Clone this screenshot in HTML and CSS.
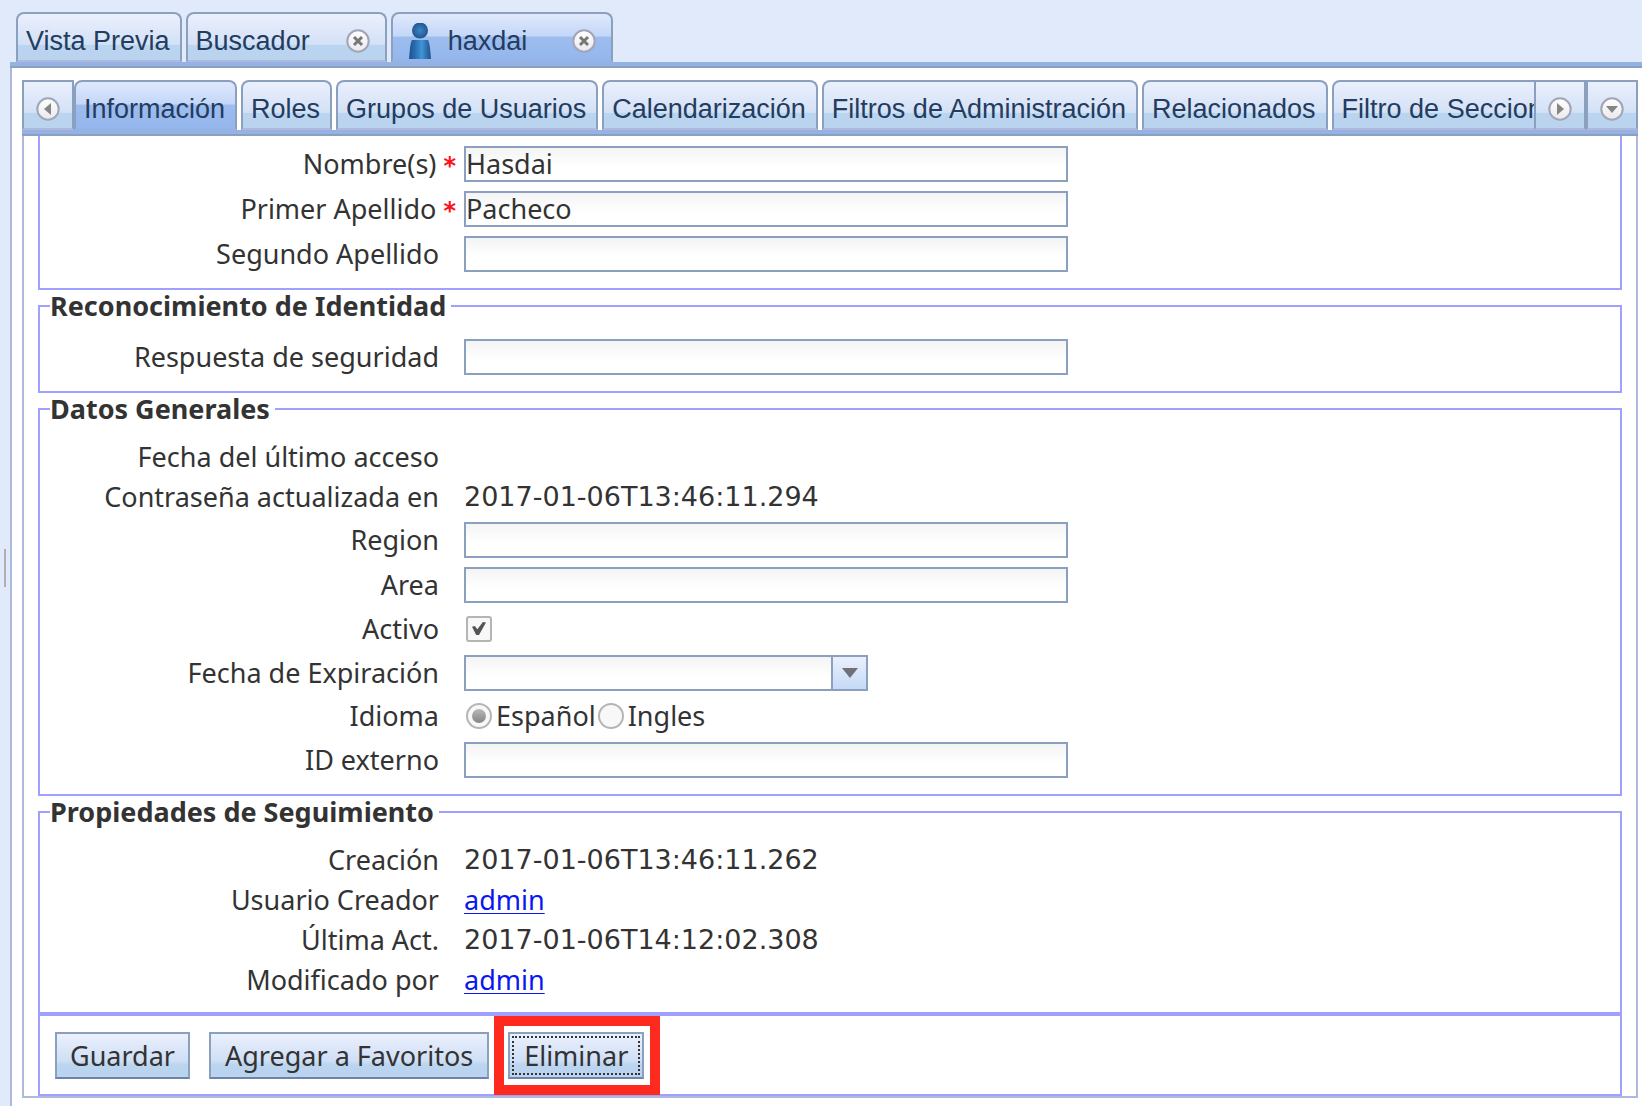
FILE: index.html
```html
<!DOCTYPE html>
<html lang="es">
<head>
<meta charset="utf-8">
<meta name="viewport" content="width=device-width, initial-scale=1">
<title>haxdai</title>
<link rel="stylesheet" href="styles.css">
</head>
<body>
<svg class="defs" aria-hidden="true">
  <defs>
    <linearGradient id="disc" x1="0" y1="0" x2="0" y2="1"><stop offset="0" stop-color="#fff"/><stop offset="1" stop-color="#e9e9ee"/></linearGradient>
    <radialGradient id="head"><stop offset="0" stop-color="#3588c9"/><stop offset="1" stop-color="#27538f"/></radialGradient>
    <linearGradient id="torso"><stop offset="0" stop-color="#214f8c"/><stop offset=".3" stop-color="#2a70b3"/><stop offset=".58" stop-color="#4095d6"/><stop offset="1" stop-color="#204f8b"/></linearGradient>
    <symbol id="ring" viewBox="0 0 24 24"><circle cx="12" cy="12" r="10.7" fill="url(#disc)" stroke="#a2a5b8" stroke-width="2"/></symbol>
  </defs>
</svg>
<div class="app">
  <div class="splitter"><span class="grip"></span></div>
  <main class="workspace">
    <nav class="tabs outer-tabs">
      <button class="tab" type="button">Vista Previa</button>
      <button class="tab closable" type="button"><span>Buscador</span>
        <svg class="round" viewBox="0 0 24 24"><use href="#ring"/><path d="M8 8l8 8M16 8l-8 8" stroke="#777" stroke-width="3"/></svg></button>
      <button class="tab closable with-icon active" type="button">
        <svg class="person" viewBox="0 0 22 36"><path d="M3 17H19Q20 18 21 25L22 36H0L1 25Q2 18 3 17Z" fill="url(#torso)"/><circle cx="11" cy="7.500" r="8" fill="url(#head)"/></svg>
        <span>haxdai</span>
        <svg class="round" viewBox="0 0 24 24"><use href="#ring"/><path d="M8 8l8 8M16 8l-8 8" stroke="#777" stroke-width="3"/></svg></button>
    </nav>
    <div class="pane">
      <nav class="tab-bar">
        <button class="scroll" type="button" aria-label="Anterior"><svg class="round" viewBox="0 0 24 24"><use href="#ring"/><path d="M15 6v12l-7-6z" fill="#858585"/></svg></button>
        <div class="tabs inner-tabs">
          <button class="tab active" type="button">Información</button>
          <button class="tab" type="button">Roles</button>
          <button class="tab" type="button">Grupos de Usuarios</button>
          <button class="tab" type="button">Calendarización</button>
          <button class="tab" type="button">Filtros de Administración</button>
          <button class="tab" type="button">Relacionados</button>
          <button class="tab" type="button">Filtro de Secciones</button>
        </div>
        <button class="scroll" type="button" aria-label="Siguiente"><svg class="round" viewBox="0 0 24 24"><use href="#ring"/><path d="M9 6v12l7-6z" fill="#858585"/></svg></button>
        <button class="scroll" type="button" aria-label="Lista"><svg class="round" viewBox="0 0 24 24"><use href="#ring"/><path d="M6 9h12l-6 7z" fill="#858585"/></svg></button>
      </nav>
      <form class="form">
        <fieldset class="first">
          <div class="row"><label for="nombre" class="required">Nombre(s) <b>*</b></label><input class="text" id="nombre" type="text" value="Hasdai"></div>
          <div class="row"><label for="apellido1" class="required">Primer Apellido <b>*</b></label><input class="text" id="apellido1" type="text" value="Pacheco"></div>
          <div class="row"><label for="apellido2">Segundo Apellido</label><input class="text" id="apellido2" type="text"></div>
        </fieldset>
        <fieldset>
          <legend>Reconocimiento de Identidad</legend>
          <div class="row"><label for="respuesta">Respuesta de seguridad</label><input class="text" id="respuesta" type="text"></div>
        </fieldset>
        <fieldset>
          <legend>Datos Generales</legend>
          <div class="row info"><span class="name">Fecha del último acceso</span></div>
          <div class="row info"><span class="name">Contraseña actualizada en</span><span class="stamp">2017-01-06T13:46:11.294</span></div>
          <div class="row"><label for="region">Region</label><input class="text" id="region" type="text"></div>
          <div class="row"><label for="area">Area</label><input class="text" id="area" type="text"></div>
          <div class="row tick"><label for="activo">Activo</label><input class="check" id="activo" type="checkbox" checked></div>
          <div class="row"><label for="expira">Fecha de Expiración</label>
            <div class="combo"><input id="expira" type="text"><button type="button" aria-label="Abrir calendario"><svg viewBox="0 0 18 12"><path d="M1 1h16l-8 10z" fill="#707078"/></svg></button></div></div>
          <div class="row choice"><span class="name">Idioma</span>
            <input class="radio" id="es" type="radio" name="idioma" checked><label class="option" for="es">Español</label><input class="radio" id="en" type="radio" name="idioma"><label class="option" for="en">Ingles</label></div>
          <div class="row"><label for="externo">ID externo</label><input class="text" id="externo" type="text"></div>
        </fieldset>
        <fieldset>
          <legend>Propiedades de Seguimiento</legend>
          <div class="row info"><span class="name">Creación</span><span class="stamp">2017-01-06T13:46:11.262</span></div>
          <div class="row info"><span class="name">Usuario Creador</span><a href="#admin">admin</a></div>
          <div class="row info"><span class="name">Última Act.</span><span class="stamp">2017-01-06T14:12:02.308</span></div>
          <div class="row info"><span class="name">Modificado por</span><a href="#admin">admin</a></div>
        </fieldset>
        <fieldset class="actions">
          <button class="push" type="button">Guardar</button>
          <button class="push" type="button">Agregar a Favoritos</button>
          <span class="marked"><button class="push focused" type="button">Eliminar</button></span>
        </fieldset>
      </form>
    </div>
  </main>
</div>
</body>
</html>
```
FILE: styles.css
```css
* { box-sizing: border-box; }
body { margin: 0; background: #fff; color: #333; font: 27px/32px "Noto Sans", sans-serif; }
button, input { font: inherit; color: inherit; margin: 0; border-radius: 0; }
button { cursor: pointer; }
.defs { position: absolute; width: 0; height: 0; }

.app { display: flex; min-height: 100vh; background: #e1eafb; }
.splitter { flex: 0 0 10px; display: flex; align-items: center; padding: 30px 0 0 4px; }
.grip { width: 2px; height: 38px; background: #b0b0b0; }
.workspace { flex: 1; min-width: 0; display: flex; flex-direction: column; }

/* tabs */
.tabs { display: flex; gap: 4px; }
.outer-tabs { padding: 12px 0 0 6px; }
.inner-tabs { flex: 1; min-width: 0; overflow: hidden; }
.tab, .scroll {
  flex: none; display: flex; align-items: center; height: 50px; padding: 7px 10px 0 8px;
  border: 2px solid #8ba0bf; border-bottom-color: #b0b9dd;
  background: linear-gradient(#ebf0fd, #d3e1f6 66%, #bad5ef 68%, #bad3ef);
  color: #243c5f; font: 27px/32px "Liberation Sans", sans-serif; white-space: nowrap;
}
.tab { border-radius: 8px 8px 0 0; }
.tab.active { border-bottom-color: #94b3e7; background: linear-gradient(#dfe9fc, #c3d7f9 48%, #9dbdee 50%, #94b6ec); }
.closable { padding-right: 15px; }
.closable .round { margin-left: 36px; }
.with-icon { padding-left: 16px; }
.with-icon .round { margin-left: 45px; }
.round { flex: none; display: block; width: 24px; height: 24px; }
.person { width: 22px; height: 36px; margin-right: 17px; }
.scroll { width: 52px; justify-content: center; padding: 8px 0 0; }

.pane { flex: 1; border-left: 2px solid #b0b9dd; background: #fff; padding: 12px 4px 8px 10px; }
.outer-tabs, .tab-bar { border-bottom: 2px solid #8ba0bf; box-shadow: inset 0 -4px #94b3e4; padding-bottom: 4px; }
.tab-bar { display: flex; }

/* form */
.form { border: 2px solid #b0b9dd; border-top: 0; padding: 0 14px; }
fieldset { margin: 0; padding: 12px 0; min-width: 0; border: 2px solid #a0a0ff; }
.first { border-top: 0; padding-top: 5px; }
legend { margin-left: 10px; padding: 0 5px 0 0; font-weight: 700; }
.row { display: flex; align-items: center; height: 45px; }
.row.info { height: 40px; }
.row.tick { height: 43px; }
.row.choice { height: 42px; }
.row > :first-child { flex: 0 0 424px; padding-right: 25px; text-align: right; }
.row > .required { padding-right: 8px; }
.required b { color: #ff1020; font: 700 24px/24px "DejaVu Sans", sans-serif; }
.stamp { font-family: "DejaVu Sans", sans-serif; }
a { color: #0a18f0; text-decoration-thickness: 1px; text-underline-offset: 3px; }

.text, .combo { height: 36px; border: 2px solid #8ba0bf; background: linear-gradient(#f4f4f4, #fff 60%); }
.text { width: 604px; padding: 0; outline: 0; }
.combo { display: flex; width: 404px; }
.combo input { flex: 1; min-width: 0; border: 0; padding: 0; background: none; outline: 0; }
.combo button { width: 35px; padding: 0; border: 0; border-left: 2px solid #8ba0bf; background: linear-gradient(#ebf0fd, #c4daf5); display: grid; place-items: center; }
.combo svg { width: 18px; height: 12px; }

.check, .radio { appearance: none; flex: none; width: 26px; height: 26px; margin: 0 0 0 2px; border: 2px solid #b5b5b5; background: #f8f8f8; display: grid; place-items: center; }
.check { border-radius: 3px; }
.check:checked::before { content: ""; width: 14px; height: 14px; background: #555; clip-path: polygon(0 38%, 20% 32%, 38% 56%, 78% 4%, 100% 8%, 50% 96%, 30% 96%); }
.radio { border-radius: 50%; }
.radio:checked::before { content: ""; width: 14px; height: 14px; border-radius: 50%; background: linear-gradient(#b8b8b8, #858585); }
.option { padding: 0 0 0 4px; }

/* actions */
.actions { display: flex; gap: 19px; padding: 16px 15px 15px; }
.push { height: 47px; padding: 0 13px; border: 2px solid #8ba0bf; border-bottom-color: #6d84a8; background: linear-gradient(#ebf0fd, #cfdff6 62%, #bad5ef 72%, #bad3ef); }
.push:nth-child(2) { padding: 0 14px; }
.marked { position: relative; }
.marked .push { padding: 0 14px; }
.marked::after { content: ""; position: absolute; inset: -16px -16px -16px -14px; border: 10px solid #ff2a1f; pointer-events: none; }
.focused { outline: 2px dotted #333; outline-offset: -6px; }
```
